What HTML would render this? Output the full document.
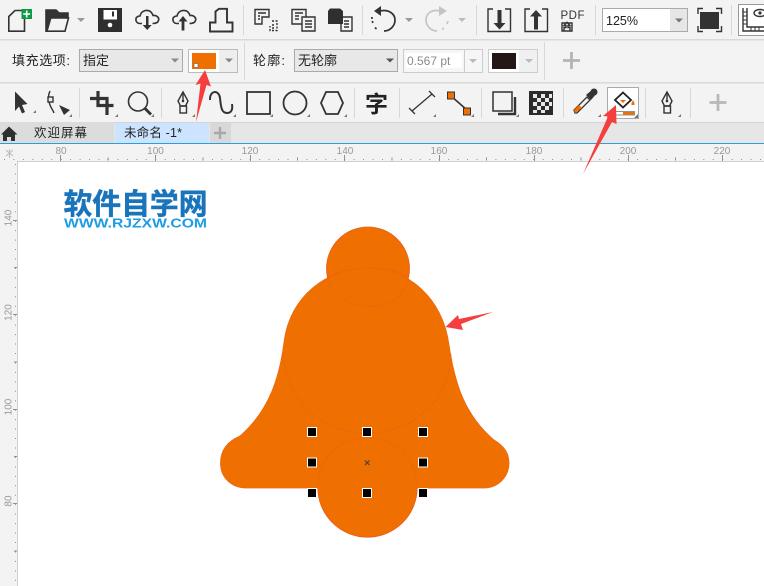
<!DOCTYPE html>
<html><head><meta charset="utf-8">
<style>
html,body{margin:0;padding:0;background:#fff}
#r{position:relative;width:764px;height:586px;overflow:hidden;background:#fff}
svg{position:absolute;left:0;top:0}
text{font-family:"Liberation Sans","Noto Sans CJK SC",sans-serif}
</style></head><body><div id="r">
<svg width="764" height="586" viewBox="0 0 764 586" xmlns="http://www.w3.org/2000/svg">
<!-- backgrounds -->
<rect x="0" y="0" width="764" height="143" fill="#f3f3f3"/>
<rect x="0" y="39" width="764" height="1.5" fill="#d9d9d9"/>
<rect x="0" y="82" width="764" height="1.5" fill="#d9d9d9"/>
<rect x="0" y="122" width="764" height="21" fill="#e6e6e6"/>
<rect x="0" y="122" width="764" height="1" fill="#d4d4d4"/>
<rect x="0" y="122" width="114" height="21" fill="#dcdcdc"/>
<rect x="115" y="123" width="94" height="20" fill="#cce4ff"/>
<rect x="210" y="123" width="21" height="20" fill="#d8d8d8"/>
<rect x="0" y="143" width="764" height="1.3" fill="#2a9fdc"/>
<rect x="0" y="144" width="764" height="18" fill="#f3f3f3"/>
<rect x="0" y="144" width="18" height="442" fill="#f3f3f3"/>
<rect x="17" y="161" width="747" height="1" fill="#cfcfcf"/>
<rect x="17" y="161" width="1" height="425" fill="#cfcfcf"/>

<!-- Row 1 icons -->
<g fill="none" stroke="#333" stroke-width="1.6">
<path d="M8.800 16.500V31.200H24.500V10.500H15Z"/>
<path d="M46 10H56L59 13H68V17H51L47 31H46Z" fill="#333"/>
<path d="M50.500 18H68.500L65 31.200H46.500Z"/>
</g>
<rect x="21.500" y="9" width="10.500" height="10" fill="#0c9a45"/>
<path d="M26.700 10.500v7M23.200 14h7" stroke="#fff" stroke-width="1.6"/>
<path d="M77 18h8l-4 4z" fill="#999"/>
<path d="M98 8H122V32H98Z" fill="#2f2f2f"/>
<rect x="103.500" y="10" width="13.500" height="9.500" fill="#fff"/><rect x="112" y="11.500" width="2" height="5" fill="#2f2f2f"/>
<circle cx="110" cy="25" r="2.300" fill="#fff"/>
<g fill="none" stroke="#333" stroke-width="1.6">
<path d="M142 23.500H140C136.500 23.500 135.500 20.500 136 18.500C136.500 16.500 139 16 140 16C141 11 146 9.500 149.500 11C151.500 12 152.500 14 153 15.500C157 15 159.500 18 158.500 20.500C158 22.500 156 23.500 152.500 23.500"/>
<path d="M179 23.500H177C173.500 23.500 172.500 20.500 173 18.500C173.500 16.500 176 16 177 16C178 11 183 9.500 186.500 11C188.500 12 189.500 14 190 15.500C194 15 196.500 18 195.500 20.500C195 22.500 193 23.500 189.500 23.500"/>
<path d="M210 31.500V22.500H215.500V11.500L219 8.800H227V22.500H232.500V31.500Z" stroke-width="1.9"/>
</g>
<path d="M146 16h2.500v9h3.200l-4.500 5-4.500-5h3.300z" fill="#333"/>
<path d="M183 16l4.500 5.500h-3.100v9h-2.800v-9h-3.100z" fill="#333"/>
<rect x="243" y="5" width="1" height="30" fill="#d8d8d8"/>
<g fill="none" stroke="#333" stroke-width="1.400">
<path d="M255 9.500H269V17H262V24H255Z"/><path d="M258 13H266M258 16H260M258 19H260"/>
<path d="M272 21H277V30.500H270V26M272 25H275M272 28H275" stroke-dasharray="2 1.500"/>
<path d="M292 9.500H306V24H292ZM295 13H303M295 16H299M295 19H299"/>
<path d="M302 17H315V31H302ZM305 21H312M305 24H312M305 27H312" fill="#f3f3f3"/>
<path d="M341 17H352V31H341ZM344 21H349M344 24H349M344 27H349" fill="#f3f3f3"/>
</g>
<path d="M328 11L330 8.500H340L343 11V24H328Z" fill="#2f2f2f"/>
<rect x="362" y="5" width="1" height="30" fill="#d8d8d8"/>
<!-- undo/redo -->
<path d="M380 11C389 9 395 14 395 20C395 26 390 31 384 31M375 27.500l1.500 1.500" fill="none" stroke="#333" stroke-width="1.7"/>
<path d="M372 17a11 11 0 0 0 1 6" fill="none" stroke="#333" stroke-width="1.7" stroke-dasharray="2 2"/>
<path d="M381 6v10l-7-5z" fill="#333"/>
<path d="M405 18h8l-4 4z" fill="#999"/>
<path d="M440 11C431 9 426 14 426 20C426 26 431 31 437 31" fill="none" stroke="#c4c4c4" stroke-width="1.7"/>
<path d="M448 21l-1 3M444 28l-2 1.500" fill="none" stroke="#c4c4c4" stroke-width="1.7"/>
<path d="M439 6v10l8-5z" fill="#c4c4c4"/>
<path d="M458 18h8l-4 4z" fill="#bbb"/>
<rect x="476" y="5" width="1" height="30" fill="#d8d8d8"/>
<g fill="none" stroke="#333" stroke-width="1.4">
<path d="M493 9H488V31.500H510.500V9H505"/>
<path d="M530 9H525V31.500H547.500V9H542"/>
</g>
<path d="M497.500 10h4v13h4l-6 6.500-6-6.500h4z" fill="#333"/>
<path d="M536 10l6 6.500h-4v13h-4v-13h-4z" fill="#333"/>
<text x="560.500" y="19" font-size="11.500" fill="#333" textLength="24">PDF</text>
<path d="M562 23H572V31H562ZM567 22l3 3.500h-2v2h2V31M567 22l-3 3.500h2v2h-2V31" fill="none" stroke="#333" stroke-width="1.400"/>
<rect x="595" y="5" width="1" height="30" fill="#d8d8d8"/>
<rect x="602.500" y="8.500" width="85" height="23" fill="#fff" stroke="#aaa"/>
<rect x="670" y="9" width="17" height="22" fill="#e6e6e6"/>
<path d="M675 18.500h8l-4 4z" fill="#777"/>
<text x="606" y="25" font-size="12.500" fill="#222">125%</text>
<rect x="700" y="12" width="19" height="17" fill="#333"/>
<path d="M698 14V8.500H703M716 8.500H721.500V14M721.500 26V31.500H716M703 31.500H698V26" fill="none" stroke="#333" stroke-width="1.400"/>
<rect x="731" y="5" width="1" height="30" fill="#d8d8d8"/>
<rect x="738.500" y="4.500" width="30" height="31" fill="#fff" stroke="#999"/>
<path d="M743 8V31H764M747 8V27H764" fill="none" stroke="#333" stroke-width="1.400"/>
<path d="M743 12h4M743 16h4M743 20h4M743 24h4M751 27v4M755 27v4M759 27v4" stroke="#333"/>
<ellipse cx="760" cy="13" rx="6" ry="3.500" fill="none" stroke="#333" stroke-width="1.400"/><circle cx="760" cy="13" r="1.600" fill="#333"/>

<!-- Row 2 -->
<text x="12" y="65" font-size="13" fill="#222" textLength="58">填充选项:</text>
<rect x="79.500" y="49.500" width="103" height="22" fill="#e8e8e8" stroke="#aaa"/>
<text x="83" y="65" font-size="13" fill="#222">指定</text>
<path d="M171 58.500h8l-4 4z" fill="#888"/>
<rect x="188.500" y="49.500" width="49" height="23" fill="#eee" stroke="#bbb"/>
<rect x="189" y="50" width="30" height="22" fill="#fff"/>
<rect x="192" y="53" width="24" height="16" fill="#ef7000"/>
<rect x="194" y="63.500" width="4" height="4" fill="#fff" stroke="#777" stroke-width="0.800"/>
<path d="M225 58.500h8l-4 4z" fill="#888"/>
<rect x="244" y="42" width="1" height="38" fill="#d8d8d8"/>
<text x="253" y="65" font-size="13" fill="#222" textLength="32">轮廓:</text>
<rect x="294.500" y="49.500" width="103" height="22" fill="#e8e8e8" stroke="#aaa"/>
<text x="298" y="65" font-size="13" fill="#222">无轮廓</text>
<path d="M386 58.500h8l-4 4z" fill="#555"/>
<rect x="403.500" y="49.500" width="79" height="23" fill="#f6f6f6" stroke="#ccc"/>
<rect x="406" y="53" width="56" height="15" fill="#fff"/>
<text x="407" y="65" font-size="12" fill="#8a8a8a">0.567 pt</text>
<rect x="464" y="50" width="1" height="22" fill="#ccc"/>
<path d="M469 59h8l-4 4z" fill="#bbb"/>
<rect x="488.500" y="49.500" width="49" height="23" fill="#f0f0f0" stroke="#ccc"/>
<rect x="489" y="50" width="30" height="22" fill="#fff"/>
<rect x="492" y="53" width="24" height="16" fill="#231815"/>
<path d="M525 59h8l-4 4z" fill="#bbb"/>
<rect x="544" y="42" width="1" height="38" fill="#d8d8d8"/>
<path d="M571.500 52v17M563 60.500h17" stroke="#b4b4b4" stroke-width="2.800"/>

<!-- Row 3 -->
<path d="M15 91.500L27.500 104L22 105L25 112L22 113.500L19 106.500L15 111Z" fill="#333"/>
<g fill="none" stroke="#333" stroke-width="1.400">
<path d="M50 91c-2 4-2 9 0 14 1 3 3 5 4 8"/>
<rect x="48" y="97" width="5" height="5" fill="#eee"/>
</g>
<path d="M59 105l11 5-6 5z" fill="#333"/>
<path d="M36 113h-3l3-3zM72 117h-3l3-3z" fill="#777"/>
<rect x="79" y="88" width="1" height="30" fill="#d8d8d8"/>
<g fill="none" stroke="#333" stroke-width="3.200">
<path d="M98 91V105.500H113.500"/><path d="M90 98.500H107V115"/>
</g>
<path d="M118 117h-3l3-3z" fill="#777"/>
<circle cx="138" cy="101.500" r="9.500" fill="none" stroke="#333" stroke-width="1.600"/>
<path d="M145 108.500l6 6" stroke="#333" stroke-width="2.800"/>
<path d="M154 117h-3l3-3z" fill="#777"/>
<rect x="161" y="88" width="1" height="30" fill="#d8d8d8"/>
<g fill="none" stroke="#333" stroke-width="1.400">
<path d="M183 92l-5 9 2.500 5h5l2.500-5Z"/><path d="M183 92v8"/><rect x="180" y="106" width="6.500" height="7"/>
</g>
<circle cx="183" cy="101" r="1.300" fill="#333"/>
<path d="M195 117h-3l3-3z" fill="#777"/>
<path d="M210 100C209.500 90 219 89.500 220 98C221 106 221 113 227 113C231 113 233 110 232 104" fill="none" stroke="#333" stroke-width="2"/>
<path d="M236 117h-3l3-3z" fill="#777"/>
<rect x="247" y="92" width="23" height="22" fill="none" stroke="#333" stroke-width="1.800"/>
<path d="M273 117h-3l3-3z" fill="#777"/>
<circle cx="295" cy="103" r="11.500" fill="none" stroke="#333" stroke-width="1.800"/>
<path d="M310 117h-3l3-3z" fill="#777"/>
<path d="M326 92H338L343 103L338 114H326L321 103Z" fill="none" stroke="#333" stroke-width="1.800"/>
<path d="M347 117h-3l3-3z" fill="#777"/>
<rect x="354" y="88" width="1" height="30" fill="#d8d8d8"/>
<text x="365" y="112" font-size="23" font-weight="700" fill="#222" textLength="24">字</text>
<rect x="399" y="88" width="1" height="30" fill="#d8d8d8"/>
<path d="M412 111L432 94M409 108l6 6M429 91l6 6" fill="none" stroke="#333" stroke-width="1.300"/>
<path d="M436 117h-3l3-3z" fill="#777"/>
<path d="M451 96L467 110" stroke="#333" stroke-width="1.600"/>
<rect x="447.500" y="92" width="7" height="7" fill="#ef7000" stroke="#333"/>
<rect x="463.500" y="108" width="7" height="7" fill="#ef7000" stroke="#333"/>
<path d="M474 117h-3l3-3z" fill="#777"/>
<rect x="481" y="88" width="1" height="30" fill="#d8d8d8"/>
<rect x="493" y="92" width="19" height="19" fill="none" stroke="#333" stroke-width="1.500"/>
<path d="M515 97V114H498" fill="none" stroke="#333" stroke-width="2.400"/>
<path d="M519 117h-3l3-3z" fill="#777"/>
<rect x="529" y="91" width="24" height="24" fill="#2b2b2b"/>
<g fill="#e8e8e8"><rect x="533" y="94" width="4" height="4"/><rect x="541" y="94" width="4" height="4"/><rect x="549" y="94" width="3" height="4"/><rect x="537" y="98" width="4" height="4"/><rect x="545" y="98" width="4" height="4"/><rect x="533" y="102" width="4" height="4"/><rect x="541" y="102" width="4" height="4"/><rect x="549" y="102" width="3" height="4"/><rect x="537" y="106" width="4" height="4"/><rect x="545" y="106" width="4" height="4"/><rect x="533" y="110" width="4" height="3"/><rect x="541" y="110" width="4" height="3"/></g>
<rect x="563" y="88" width="1" height="30" fill="#d8d8d8"/>
<path d="M575 113l-1-3 13-13 3 3-13 13z" fill="#f3f3f3" stroke="#333" stroke-width="1.300"/>
<path d="M575 113l-1-3 5-5 3 3z" fill="#ef7000"/>
<path d="M586 95l7-6 4 4-6 7z" fill="#333"/><circle cx="594" cy="92" r="3.500" fill="#333"/>
<path d="M601 117h-3l3-3z" fill="#777"/>
<rect x="607.500" y="87.500" width="31" height="31" fill="#fff" stroke="#aaa"/>
<path d="M623 92.500L631 100L623 107.500L615 100Z" fill="#fff" stroke="#222" stroke-width="1.800"/>
<path d="M620 100h6l-3 3z" fill="#ef7000"/>
<path d="M631.500 103l1.500-3 1.500 3v2h-3z" fill="#ef7000"/>
<rect x="612.500" y="111.500" width="22" height="3.500" fill="#fff" stroke="#777" stroke-width="0.800"/>
<rect x="623" y="112" width="11" height="2.500" fill="#ef7000"/>
<path d="M638 118h-4l4-4z" fill="#777"/>
<rect x="645" y="88" width="1" height="30" fill="#d8d8d8"/>
<g fill="none" stroke="#333" stroke-width="1.400">
<path d="M667 92l-5 9 2.500 5h5l2.500-5Z"/><path d="M667 92v8"/><rect x="664" y="106" width="6.500" height="7"/>
</g>
<circle cx="667" cy="101" r="1.300" fill="#333"/>
<path d="M681 117h-3l3-3z" fill="#777"/>
<rect x="690" y="88" width="1" height="30" fill="#d8d8d8"/>
<path d="M718 94v17M709.500 102.500h17" stroke="#b8b8b8" stroke-width="2.800"/>

<!-- Tabs -->
<path d="M9 126.500L17.500 134.500H15V141H11V137H7V141H3V134.500H1Z" fill="#2f2f2f"/>
<text x="34" y="137" font-size="12.500" fill="#222" textLength="53">欢迎屏幕</text>
<text x="124" y="137" font-size="12.500" fill="#222" textLength="58">未命名 -1*</text>
<path d="M220 127v12M214 133h12" stroke="#a8a8a8" stroke-width="2.400"/>

<!-- Rulers -->
<g font-size="10" fill="#999" text-anchor="middle">
<text x="61" y="154">80</text><text x="155.500" y="154">100</text><text x="250" y="154">120</text><text x="345" y="154">140</text><text x="439" y="154">160</text><text x="534" y="154">180</text><text x="628" y="154">200</text><text x="722" y="154">220</text>
<text transform="translate(11.500,218) rotate(-90)">140</text>
<text transform="translate(11.500,312.500) rotate(-90)">120</text>
<text transform="translate(11.500,407) rotate(-90)">100</text>
<text transform="translate(11.500,501) rotate(-90)">80</text>
</g>
<path d="M6 150l7 6M13 150l-7 6M9.500 149v9" stroke="#bbb" stroke-width="1" fill="none"/>
<path d="M60.500 155v6M155.500 155v6M250.500 155v6M344.500 155v6M439.500 155v6M534.500 155v6M628.500 155v6M722.500 155v6M13 220.500h4M13 314.500h4M13 409.500h4M13 503.500h4" stroke="#8f8f8f"/>
<path d="M108 157.500v3M203 157.500v3M297.500 157.500v3M392 157.500v3M486.500 157.500v3M581 157.500v3M675.500 157.500v3M14 267.500h3M14 362h3M14 456.500h3M14 551h3" stroke="#8f8f8f"/>
<path d="M0 159.500H764" stroke="#8f8f8f" stroke-dasharray="1 8.450" stroke-dashoffset="-4"/>
<path d="M15.500 162V586" stroke="#8f8f8f" stroke-dasharray="1 8.450" stroke-dashoffset="-2"/>

<!-- Logo -->
<text x="63.500" y="214" font-size="29" font-weight="700" fill="#1a74bb" stroke="#1a74bb" stroke-width="0.500" textLength="144" lengthAdjust="spacingAndGlyphs" style='font-family:"Noto Sans CJK SC",sans-serif'>软件自学网</text>
<text x="64" y="227.500" font-size="12.500" font-weight="700" fill="#1c9ce2" textLength="143" lengthAdjust="spacingAndGlyphs">WWW.RJZXW.COM</text>

<!-- Bell -->
<g fill="#ef7000" stroke="#ee5a1a" stroke-width="0.800">
<circle cx="368" cy="268.500" r="41.500"/>
<path d="M368 268C328 268 290 295 284 342C280 375 270 410 240 436C226 442 220.500 452 220.500 463C220.500 478 232 488 246 488H484C498 488 509 477 509 463C509 453 504 446 494 440C465 415 455 385 449 345C443 298 408 268 368 268Z"/>
<circle cx="367.500" cy="487.500" r="49.700"/>
</g>
<g fill="#ef7000">
<path d="M368 268C328 268 290 295 284 342C280 375 270 410 240 436C226 442 220.500 452 220.500 463C220.500 478 232 488 246 488H484C498 488 509 477 509 463C509 453 504 446 494 440C465 415 455 385 449 345C443 298 408 268 368 268Z"/>
<rect x="320" y="470" width="95" height="25"/>
<circle cx="368" cy="290" r="30"/>
</g>
<path d="M328 278C340 266 396 264 408 278M328 278C336 312 400 320 408 278M283 353C285 400 320 433 367 433C414 433 450 400 451 353M318 487C318 458 340 437.500 367 437.500C394 437.500 417 458 417 487" fill="none" stroke="#f05a14" stroke-width="1" stroke-dasharray="1.500 2"/>
<!-- handles -->
<g fill="#000" stroke="#fff" stroke-width="1">
<rect x="307.500" y="427.500" width="9" height="9"/><rect x="362.500" y="427.500" width="9" height="9"/><rect x="418.500" y="427.500" width="9" height="9"/>
<rect x="307.500" y="458" width="9" height="9"/><rect x="418.500" y="458" width="9" height="9"/>
<rect x="307.500" y="488.500" width="9" height="9"/><rect x="362.500" y="488.500" width="9" height="9"/><rect x="418.500" y="488.500" width="9" height="9"/>
</g>
<path d="M365 460.500l4.500 4.500M369.500 460.500l-4.500 4.500" stroke="#444" stroke-width="1.200"/>

<!-- Red arrows -->
<g fill="#f53f3f">
<path d="M205 70L195.500 85L200.500 83.500L196 122L206.500 85L211 86.500Z"/>
<path d="M616 105L603 116L608 116.500L583 174L612 122L616.500 124Z"/>
<path d="M445.500 327L458 315L459 319L493 312L461 324L463 330Z"/>
</g>
</svg>
</div></body></html>
